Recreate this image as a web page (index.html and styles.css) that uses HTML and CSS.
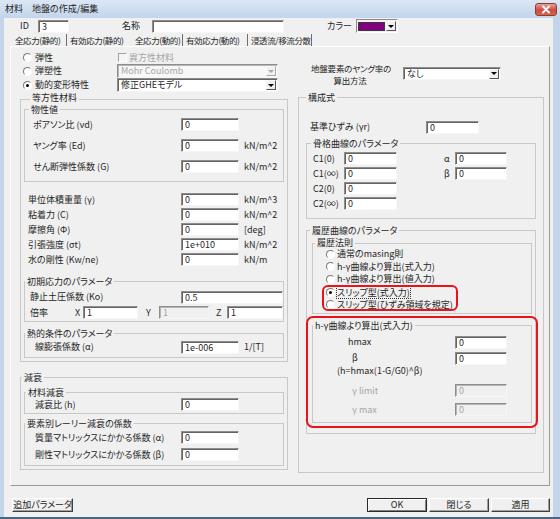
FILE: index.html
```html
<!DOCTYPE html>
<html>

<head>
  <meta charset="utf-8">
  <link rel="stylesheet" href="styles.css">
</head>

<body>
  <div class="window">
<!-- title bar -->
    <div class="titlebar">
      <span class="title">材料　地盤の作成/編集</span>
      <span class="close">
        <svg width="20" height="11" viewBox="0 0 20 11"><path d="M7 2.5 L13 8.5 M13 2.5 L7 8.5" stroke="#fff" stroke-width="2" stroke-linecap="round"/></svg>
      </span>
    </div>

    <div class="client">
      <div class="head-row">
        <span class="id-lbl">ID</span>
        <div class="edit id-edit">3</div>
        <span class="name-lbl">名称</span>
        <div class="edit name-edit"></div>
        <span class="color-lbl">カラー</span>
        <div class="color-combo"><span class="swatch"></span><span class="drop"><i class="tri"></i></span></div>
      </div>

      <div class="tabs">
        <div class="tab t1">全応力(静的)</div>
        <div class="tab t2">有効応力(静的)</div>
        <div class="tab t3 active">全応力(動的)</div>
        <div class="tab t4">有効応力(動的)</div>
        <div class="tab t5">浸透流/移流分散</div>
      </div>

      <div class="panel">
<!-- left column -->
        <div class="col-left">
          <div class="opts">
            <div class="radio-item"><span class="radio"></span>弾性</div>
            <div class="check-item disabled"><span class="check"></span>異方性材料</div>
            <div class="radio-item"><span class="radio"></span>弾塑性</div>
            <div class="combo disabled"><span class="combo-text">Mohr Coulomb</span><span class="drop"><i class="tri"></i></span></div>
            <div class="radio-item"><span class="radio checked"></span>動的変形特性</div>
            <div class="combo"><span class="combo-text">修正GHEモデル</span><span class="drop"><i class="tri"></i></span></div>
          </div>

          <div class="group g-iso">
            <span class="cap">等方性材料</span>
            <div class="group g-prop">
              <span class="cap">物性値</span>
              <div class="row"><span>ポアソン比 (νd)</span><div class="edit">0</div></div>
              <div class="row"><span>ヤング率 (Ed)</span><div class="edit">0</div><span>kN/m^2</span></div>
              <div class="row"><span>せん断弾性係数 (G)</span><div class="edit">0</div><span>kN/m^2</span></div>
            </div>
            <div class="plain">
              <div class="row"><span>単位体積重量 (γ)</span><div class="edit">0</div><span>kN/m^3</span></div>
              <div class="row"><span>粘着力 (C)</span><div class="edit">0</div><span>kN/m^2</span></div>
              <div class="row"><span>摩擦角 (Φ)</span><div class="edit">0</div><span>[deg]</span></div>
              <div class="row"><span>引張強度 (σt)</span><div class="edit">1e+010</div><span>kN/m^2</span></div>
              <div class="row"><span>水の剛性 (Kw/ne)</span><div class="edit">0</div><span>kN/m</span></div>
            </div>
            <div class="group g-init">
              <span class="cap">初期応力のパラメータ</span>
              <div class="row"><span>静止土圧係数 (Ko)</span><div class="edit wide">0.5</div></div>
              <div class="mult">
                <span class="m-lbl">倍率</span>
                <span class="axis">X</span><div class="edit ex">1</div>
                <span class="axis ay">Y</span><div class="edit ey disabled">1</div>
                <span class="axis az">Z</span><div class="edit ez">1</div>
              </div>
            </div>
            <div class="group g-heat">
              <span class="cap">熱的条件のパラメータ</span>
              <div class="row"><span>線膨張係数 (α)</span><div class="edit">1e-006</div><span>1/[T]</span></div>
            </div>
          </div>

          <div class="group g-damp">
            <span class="cap">減衰</span>
            <div class="group g-mat">
              <span class="cap">材料減衰</span>
              <div class="row"><span>減衰比 (h)</span><div class="edit">0</div></div>
            </div>
            <div class="group g-rayl">
              <span class="cap">要素別レーリー減衰の係数</span>
              <div class="row"><span>質量マトリックスにかかる係数 (α)</span><div class="edit">0</div></div>
              <div class="row"><span>剛性マトリックスにかかる係数 (β)</span><div class="edit">0</div></div>
            </div>
          </div>
        </div>

<!-- right column -->
        <div class="col-right">
          <div class="young">
            <div class="young-lbl">地盤要素のヤング率の<br>算出方法</div>
            <div class="combo"><span class="combo-text">なし</span><span class="drop"><i class="tri"></i></span></div>
          </div>

          <div class="group g-model">
            <span class="cap">構成式</span>
            <div class="base-row"><span>基準ひずみ (γr)</span><div class="edit">0</div></div>

            <div class="group g-skel">
              <span class="cap">骨格曲線のパラメータ</span>
              <div class="skel-grid">
                <span class="lbl">C1(0)</span><div class="edit">0</div>
                <span class="greek">α</span><div class="edit">0</div>
                <span class="lbl">C1(∞)</span><div class="edit">0</div>
                <span class="greek">β</span><div class="edit">0</div>
                <span class="lbl">C2(0)</span><div class="edit">0</div>
                <span class="lbl">C2(∞)</span><div class="edit">0</div>
              </div>
            </div>

            <div class="group g-hyst">
              <span class="cap">履歴曲線のパラメータ</span>
              <div class="group g-rule">
                <span class="cap">履歴法則</span>
                <div class="rule-row"><span class="radio"></span>通常のmasing則</div>
                <div class="rule-row"><span class="radio"></span>h-γ曲線より算出(式入力)</div>
                <div class="rule-row"><span class="radio"></span>h-γ曲線より算出(値入力)</div>
                <div class="mark-slip">
                  <div class="rule-row"><span class="radio checked"></span><span class="focus">スリップ型(式入力)</span></div>
                  <div class="rule-row"><span class="radio"></span>スリップ型(ひずみ領域を規定)</div>
                </div>
              </div>

              <div class="group g-hg">
                <span class="cap">h-γ曲線より算出(式入力)</span>
                <div class="hg-row"><span class="i-hmax">hmax</span><div class="edit">0</div></div>
                <div class="hg-row beta"><span class="i-39">β</span><div class="edit">0</div></div>
                <div class="formula">(h=hmax(1-G/G0)^β)</div>
                <div class="hg-row limit disabled"><span class="i-39">γ limit</span><div class="edit disabled">0</div></div>
                <div class="hg-row max disabled"><span class="i-39">γ max</span><div class="edit disabled">0</div></div>
              </div>
            </div>
          </div>
        </div>
      </div>

      <div class="footer">
        <div class="btn btn-extra">追加パラメータ</div>
        <div class="btn btn-ok default">OK</div>
        <div class="btn">閉じる</div>
        <div class="btn btn-apply">適用</div>
      </div>
    </div>
  </div>
</body>

</html>
```

FILE: styles.css
```css
* {
  box-sizing: border-box;
}

body {
  margin: 0;
  font: 9px/12px "Noto Sans CJK JP", "Noto Sans", sans-serif;
  font-feature-settings: "palt";
  color: #262626;
}

.window {
  width: 560px;
  height: 519px;
  display: flex;
  flex-direction: column;
  background: #c3d5eb;
  border-bottom: 2px solid #4a6580;
}

/* title bar */
.titlebar {
  height: 18px;
  flex: none;
  display: flex;
  align-items: center;
  padding-left: 5px;
  background: linear-gradient(#dce7f5, #c3d5eb);
}

.close {
  margin-left: auto;
  margin-right: 3px;
  width: 22px;
  height: 13px;
  display: flex;
  border: 1px solid #8f3b33;
  border-radius: 3px;
  background: linear-gradient(#e8a196, #cc4b3f 55%, #d8634f);
}

.client {
  flex: 1;
  margin: 0 7px 0 4px;
  padding: 1px 3px 0 6px;
  background: #f0f0f0;
}

/* id / name / colour */
.head-row {
  height: 14px;
  display: flex;
  align-items: center;
}

.id-lbl {
  margin-left: 10px;
  width: 18px;
}

.id-edit {
  width: 31px;
}

.name-lbl {
  margin-left: 53px;
  width: 30px;
}

.name-edit {
  width: 132px;
}

.color-lbl {
  margin-left: 43px;
  width: 29px;
}

.color-combo {
  width: 42px;
  height: 14px;
  display: flex;
  align-items: center;
  padding: 0 1px 0 1px;
  border: 1px solid;
  border-color: #8d8d8d #fff #fff #8d8d8d;
}

.swatch {
  width: 29px;
  height: 9px;
  border: 1px solid #3a3a3a;
  background: #800080;
  margin-right: 1px;
}

/* edits, combos */
.edit {
  height: 13px;
  padding-left: 3px;
  line-height: 11px;
  white-space: nowrap;
  overflow: hidden;
  background: #fff;
  border: 1px solid;
  border-color: #8d8d8d #f6f6f6 #f6f6f6 #8d8d8d;
  box-shadow: inset 1px 1px 0 #646464;
}

.edit.disabled {
  background: #f0f0f0;
  color: #a6a6a6;
  box-shadow: inset 1px 1px 0 #b5b5b5;
}

.combo {
  height: 14px;
  display: flex;
  align-items: center;
  padding: 0 1px 0 3px;
  background: #fff;
  border: 1px solid;
  border-color: #8d8d8d #f6f6f6 #f6f6f6 #8d8d8d;
  box-shadow: inset 1px 1px 0 #646464;
}

.combo-text {
  flex: 1;
  white-space: nowrap;
}

.drop {
  width: 10px;
  height: 10px;
  display: flex;
  align-items: center;
  justify-content: center;
  background: #f0f0f0;
  border: 1px solid;
  border-color: #fafafa #555 #555 #fafafa;
}

.tri {
  border-left: 3px solid transparent;
  border-right: 3px solid transparent;
  border-top: 3px solid #000;
}

.combo.disabled {
  background: #f7f7f7;
  box-shadow: inset 1px 1px 0 #b5b5b5;
}

.combo.disabled .tri {
  border-top-color: #a8a8a8;
}

.combo.disabled .drop {
  border-color: #fafafa #aaa #aaa #fafafa;
}

.disabled {
  color: #a6a6a6;
}

/* tabs */
.tabs {
  height: 12px;
  margin-top: 1px;
  display: flex;
  padding-left: 2px;
}

.tab {
  padding-left: 3px;
  font-size: 8.5px;
  line-height: 12px;
  letter-spacing: -0.4px;
  white-space: nowrap;
  border-right: 1px solid #6e6e6e;
}

.t1 {
  width: 55px;
}

.t2 {
  width: 64px;
}

.t3 {
  width: 53px;
}

.t4 {
  width: 65px;
}

.t5 {
  width: 64px;
}

.tab.active {
  position: relative;
  margin-left: -1px;
  padding-left: 4px;
  border-left: 1px solid #f0f0f0;
  background: #f0f0f0;
}

.panel {
  width: 540px;
  height: 440px;
  display: flex;
  gap: 10px;
  padding: 3px 4px 0 9px;
  border: 1px solid;
  border-color: #fff #9b9b9b #9b9b9b #fff;
}

/* group boxes */
.group {
  position: relative;
  border: 1px solid #c8c8c8;
}

.cap {
  position: absolute;
  top: -5px;
  left: 4px;
  padding: 0 2px;
  line-height: 9px;
  white-space: nowrap;
  background: #f0f0f0;
}

.row {
  display: grid;
  grid-template-columns: 1fr 58px 39px;
  column-gap: 5px;
  align-items: center;
  white-space: nowrap;
}

.edit.wide {
  grid-column: 2 / 4;
}

/* radios / checks */
.radio-item,
.check-item,
.rule-row {
  display: flex;
  align-items: center;
  white-space: nowrap;
}

.radio {
  position: relative;
  width: 9px;
  height: 9px;
  margin: 0 3px;
  border-radius: 50%;
  background: #fff;
  border: 1px solid;
  border-color: #7a7a7a #fdfdfd #fdfdfd #7a7a7a;
}

.radio.checked::after {
  content: "";
  position: absolute;
  left: 2px;
  top: 2px;
  width: 3px;
  height: 3px;
  border-radius: 50%;
  background: #000;
}

.check {
  width: 9px;
  height: 9px;
  margin: 0 2px 0 1px;
  background: #f4f4f4;
  border: 1px solid;
  border-color: #a4a4a4 #fff #fff #a4a4a4;
}

/* left column */
.col-left {
  width: 268px;
  flex: none;
}

.opts {
  height: 43px;
  padding-top: 1px;
  display: grid;
  grid-template-columns: 97px 161px;
  grid-template-rows: 13px 14px 14px;
  align-items: center;
}

.g-iso {
  height: 263px;
  margin-top: 6px;
  padding: 0 3px;
}

.g-iso > .cap {
  top: -7px;
  left: 9px;
}

.g-prop {
  height: 73px;
  margin-top: 9px;
  padding: 4px 0 0 8px;
}

.g-prop .row {
  height: 21px;
}

.plain {
  margin-top: 10px;
  padding: 0 1px 0 4px;
}

.plain .row {
  height: 15px;
}

.g-init {
  height: 41px;
  margin-top: 14px;
  padding: 7px 0 0 5px;
}

.g-init > .cap,
.g-heat > .cap,
.g-rayl > .cap {
  left: 0;
}

.g-init .row {
  height: 16px;
}

.mult {
  height: 15px;
  display: flex;
  align-items: center;
}

.m-lbl {
  width: 45px;
}

.axis {
  width: 8px;
}

.ex {
  width: 55px;
}

.axis.ay {
  width: 13px;
  margin-left: 8px;
}

.ey {
  width: 50px;
}

.axis.az {
  width: 11px;
  margin-left: 7px;
}

.ez {
  width: 56px;
}

.g-heat {
  height: 25px;
  margin-top: 11px;
  padding: 5px 0 0 10px;
}

.g-heat .row {
  height: 16px;
}

.g-damp {
  height: 93px;
  margin-top: 15px;
  padding: 0 3px;
}

.g-damp > .cap,
.g-mat > .cap {
  left: 1px;
}

.g-mat {
  height: 22px;
  margin-top: 14px;
  padding: 5px 0 0 10px;
}

.g-mat .row {
  height: 13px;
}

.g-rayl {
  height: 43px;
  margin-top: 9px;
  padding: 5px 0 0 10px;
}

.g-rayl .row {
  height: 17px;
}

/* right column */
.col-right {
  width: 246px;
  flex: none;
}

.young {
  height: 47px;
  display: flex;
  align-items: center;
}

.young-lbl {
  width: 78px;
  margin-left: 13px;
  font-size: 8.5px;
  text-align: center;
  line-height: 12px;
  letter-spacing: -0.2px;
  white-space: nowrap;
}

.young .combo {
  width: 98px;
  height: 13px;
  margin-left: 14px;
}

.g-model {
  height: 376px;
  padding: 0 7px;
}

.g-model > .cap {
  left: 7px;
}

.base-row {
  height: 14px;
  margin-top: 22px;
  padding-left: 4px;
  display: flex;
  align-items: center;
}

.base-row span {
  width: 116px;
}

.base-row .edit {
  width: 53px;
}

.g-skel {
  height: 76px;
  margin-top: 9px;
  padding: 7px 0 0 6px;
}

.skel-grid {
  display: grid;
  grid-template-columns: 31px 53px 47px 11px 52px;
  grid-auto-rows: 15px;
  align-items: center;
}

.skel-grid .lbl {
  grid-column: 1;
}

.skel-grid .greek {
  grid-column: 4;
}

.g-hyst {
  height: 204px;
  margin-top: 11px;
  padding: 0 3px 0 5px;
}

.g-hyst > .cap {
  left: 3px;
}

.g-rule {
  height: 71px;
  margin-top: 12px;
  padding-top: 4px;
}

.g-rule > .cap {
  top: -6px;
  left: 2px;
}

.rule-row {
  height: 12.6px;
}

.rule-row .radio {
  margin: 0 2px 0 13px;
}

.focus {
  outline: 1px dotted #333;
  outline-offset: 0;
  line-height: 11px;
}

.mark-slip {
  position: relative;
}

.mark-slip::after {
  content: "";
  position: absolute;
  top: -1px;
  left: 9px;
  width: 132px;
  bottom: 0;
  border: 2px solid #e8141b;
  border-radius: 6px;
}

.g-hg {
  height: 98px;
  margin-top: 11px;
  padding: 9px 24px 0 0;
}

.g-hg > .cap {
  left: 0;
}

.g-hg::after {
  content: "";
  position: absolute;
  top: -10px;
  left: -7px;
  right: -7px;
  bottom: -6px;
  border: 2px solid #e8141b;
  border-radius: 7px;
}

.hg-row {
  height: 14px;
  display: grid;
  grid-template-columns: 1fr 52px;
  align-items: center;
  white-space: nowrap;
}

.i-hmax {
  padding-left: 35px;
}

.i-39 {
  padding-left: 39px;
}

.hg-row.beta {
  margin-top: 2px;
}

.formula {
  height: 12px;
  padding-left: 24px;
  white-space: nowrap;
}

.hg-row.limit {
  height: 13px;
  margin-top: 7px;
}

.hg-row.max {
  height: 13px;
  margin-top: 6px;
}

/* bottom buttons */
.footer {
  height: 14px;
  margin-top: 12px;
  display: flex;
}

.btn {
  width: 60px;
  height: 14px;
  display: flex;
  align-items: center;
  justify-content: center;
  white-space: nowrap;
  background: #f0f0f0;
  border: 1px solid;
  border-color: #fff #404040 #404040 #fff;
  box-shadow: inset -1px -1px 0 #a0a0a0;
}

.btn + .btn {
  margin-left: 2px;
}

.btn-extra {
  width: 61px;
  margin-left: 2px;
}

.btn-ok.default {
  margin-left: auto;
  border-color: #2a2a2a;
  box-shadow: inset 1px 1px 0 #fff, inset -1px -1px 0 #808080;
}

.btn-apply {
  width: 59px;
}
```
